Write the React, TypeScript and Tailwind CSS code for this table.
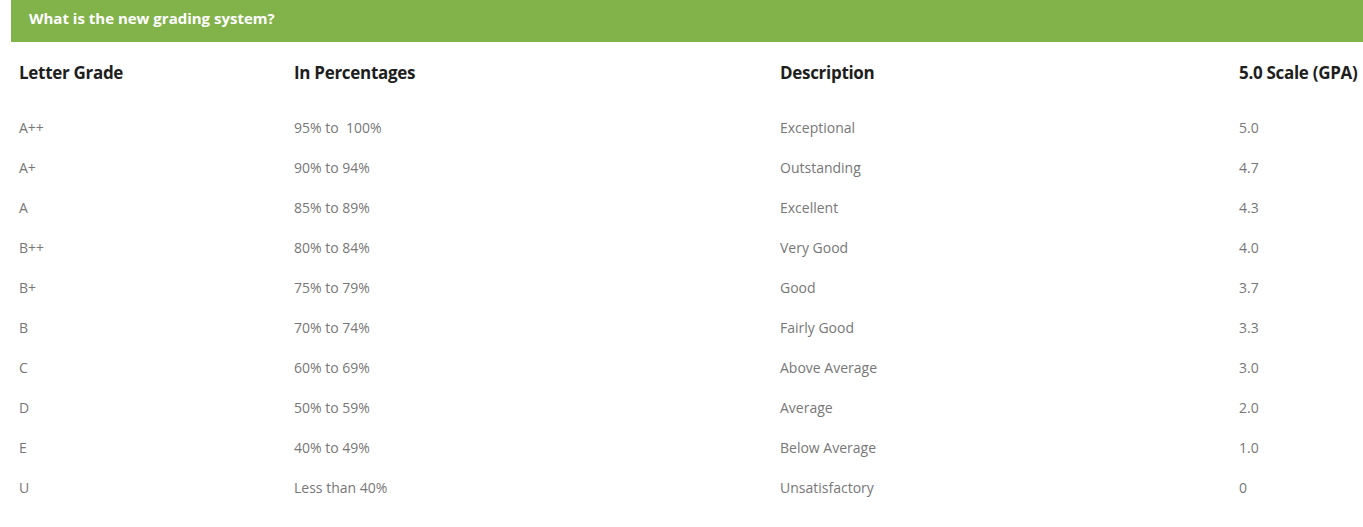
const rows = [
  ['A++', '95% to  100%', 'Exceptional', '5.0'],
  ['A+', '90% to 94%', 'Outstanding', '4.7'],
  ['A', '85% to 89%', 'Excellent', '4.3'],
  ['B++', '80% to 84%', 'Very Good', '4.0'],
  ['B+', '75% to 79%', 'Good', '3.7'],
  ['B', '70% to 74%', 'Fairly Good', '3.3'],
  ['C', '60% to 69%', 'Above Average', '3.0'],
  ['D', '50% to 59%', 'Average', '2.0'],
  ['E', '40% to 49%', 'Below Average', '1.0'],
  ['U', 'Less than 40%', 'Unsatisfactory', '0'],
]

const cols = 'grid grid-cols-[275px_486px_459px_1fr]'

export default function App() {
  return (
    <div className="min-h-[527px] bg-white pl-[11px] font-['Open_Sans',sans-serif]">
      <div className="flex h-[42px] items-center bg-[#82b34a] pl-[18px] pb-[6px]">
        <h2 className="text-[15px] font-bold text-white">What is the new grading system?</h2>
      </div>

      <div className="w-[1352px]">
        {/* cabecera */}
        <div className={`${cols} h-[65px] pt-[19px] text-[17px] font-bold leading-6 tracking-[-0.3px] text-[#1e1e1e]`}>
          <div className="px-2">Letter Grade</div>
          <div className="px-2">In Percentages</div>
          <div className="px-2">Description</div>
          <div className="px-2 whitespace-nowrap">5.0 Scale (GPA)</div>
        </div>

        {rows.map((r) => (
          <div key={r[0]} className={`${cols} h-10 items-center text-[14px] text-[#777777]`}>
            {r.map((c, i) => (
              <div key={i} className="px-2 whitespace-pre">
                {c}
              </div>
            ))}
          </div>
        ))}
      </div>
    </div>
  )
}
